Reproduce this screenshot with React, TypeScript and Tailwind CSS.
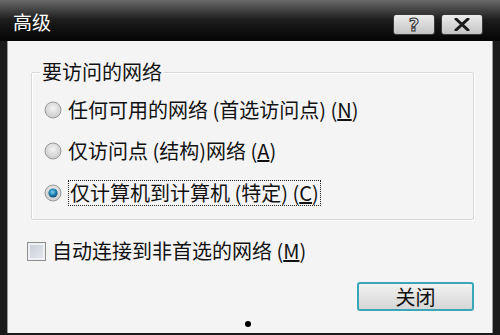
import React from "react";

const font = { fontFamily: '"Noto Sans CJK SC", "Microsoft YaHei", sans-serif' };

function Radio({ checked }: { checked?: boolean }) {
  return (
    <svg width="18" height="18" viewBox="0 0 18 18" className="shrink-0">
      <defs>
        <radialGradient id="rg" cx="50%" cy="40%" r="60%">
          <stop offset="0%" stopColor="#f4f4f4" />
          <stop offset="100%" stopColor="#c9c9c9" />
        </radialGradient>
        <radialGradient id="rb" cx="45%" cy="40%" r="60%">
          <stop offset="0%" stopColor="#7fd4ef" />
          <stop offset="60%" stopColor="#1d7fb0" />
          <stop offset="100%" stopColor="#0b4a72" />
        </radialGradient>
      </defs>
      <circle cx="9" cy="9" r="8" fill="url(#rg)" stroke="#9a9a9a" strokeWidth="1" />
      {checked && <circle cx="9" cy="9" r="4.6" fill="url(#rb)" />}
    </svg>
  );
}

export default function App() {
  return (
    <div className="w-[500px] h-[335px] bg-[#1b1b1b] overflow-hidden flex flex-col" style={font}>
      {/* title bar */}
      <div className="h-[41px] shrink-0 flex items-center justify-between pl-[13px] pr-[17px] bg-gradient-to-b from-[#6a6a6a] via-[#1c1c1c] to-[#050505]">
        <span className="text-white text-[19px] leading-none pt-[1px]">高级</span>
        <div className="flex gap-[6px] pt-[8px]">
          <div className="w-[42px] h-[21px] border border-[#3a3a3a] rounded-[3px] bg-gradient-to-b from-[#ececec] to-[#c4c4c4] flex items-center justify-center">
            <span className="text-[#555] text-[18px] font-bold leading-none" style={{ fontFamily: '"DejaVu Sans", sans-serif', WebkitTextStroke: "1px #333", color: "#e0e0e0" }}>?</span>
          </div>
          <div className="w-[42px] h-[21px] border border-[#3a3a3a] rounded-[3px] bg-gradient-to-b from-[#ececec] to-[#c4c4c4] flex items-center justify-center">
            <svg width="16" height="13" viewBox="0 0 16 13">
              <path d="M2 1 L14 12 M14 1 L2 12" stroke="#1a1a1a" strokeWidth="3" strokeLinecap="round" />
            </svg>
          </div>
        </div>
      </div>
      {/* client */}
      <div className="flex-1 flex ml-[7px] mr-[7px] mb-[2px] bg-[#f4f4f4] border-l border-r border-[#9a9a9a]">
        <div className="flex-1 flex flex-col pl-[23px] pr-[18px] pt-[31px]">
          {/* group box */}
          <div className="relative h-[148px] border border-[#d8d8d8] rounded-[2px] shadow-[inset_1px_1px_0_#ffffff,1px_1px_0_#ffffff] flex flex-col pl-[12px] pt-[25px] gap-[17px]">
            <span className="absolute left-[8px] top-[-13px] bg-[#f4f4f4] px-[2px] text-[20px] leading-[24px] text-[#111]">要访问的网络</span>
            <div className="flex items-center gap-[6px]">
              <Radio />
              <span className="text-[20px] leading-[24px] text-[#111] whitespace-nowrap">任何可用的网络 (首选访问点) (<span className="underline">N</span>)</span>
            </div>
            <div className="flex items-center gap-[6px]">
              <Radio />
              <span className="text-[20px] leading-[24px] text-[#111] whitespace-nowrap">仅访问点 (结构)网络 (<span className="underline">A</span>)</span>
            </div>
            <div className="flex items-center gap-[6px]">
              <Radio checked />
              <span className="text-[20px] leading-[24px] text-[#111] whitespace-nowrap border border-dotted border-[#222] px-[1px]">仅计算机到计算机 (特定) (<span className="underline">C</span>)</span>
            </div>
          </div>
          {/* checkbox */}
          <div className="flex items-center gap-[6px] mt-[19px] ml-[-4px]">
            <div className="w-[19px] h-[19px] border border-[#8f8f8f] bg-gradient-to-br from-[#c8ced6] to-[#e6e9ee] shadow-[inset_0_0_0_2px_#eef0f3]" />
            <span className="text-[20px] leading-[24px] text-[#111] whitespace-nowrap">自动连接到非首选的网络 (<span className="underline">M</span>)</span>
          </div>
          {/* button */}
          <div className="flex justify-end mt-[19px] mr-[0px]">
            <div className="w-[117px] h-[29px] rounded-[3px] border-2 border-[#3aa7b8] bg-gradient-to-b from-[#f2f2f2] to-[#d6d6d6] flex items-center justify-center">
              <span className="text-[20px] leading-none text-[#111]">关闭</span>
            </div>
          </div>
          <div className="flex justify-center mt-[10px] pr-[10px]">
            <div className="w-[6px] h-[6px] rounded-full bg-black" />
          </div>
        </div>
      </div>
    </div>
  );
}
